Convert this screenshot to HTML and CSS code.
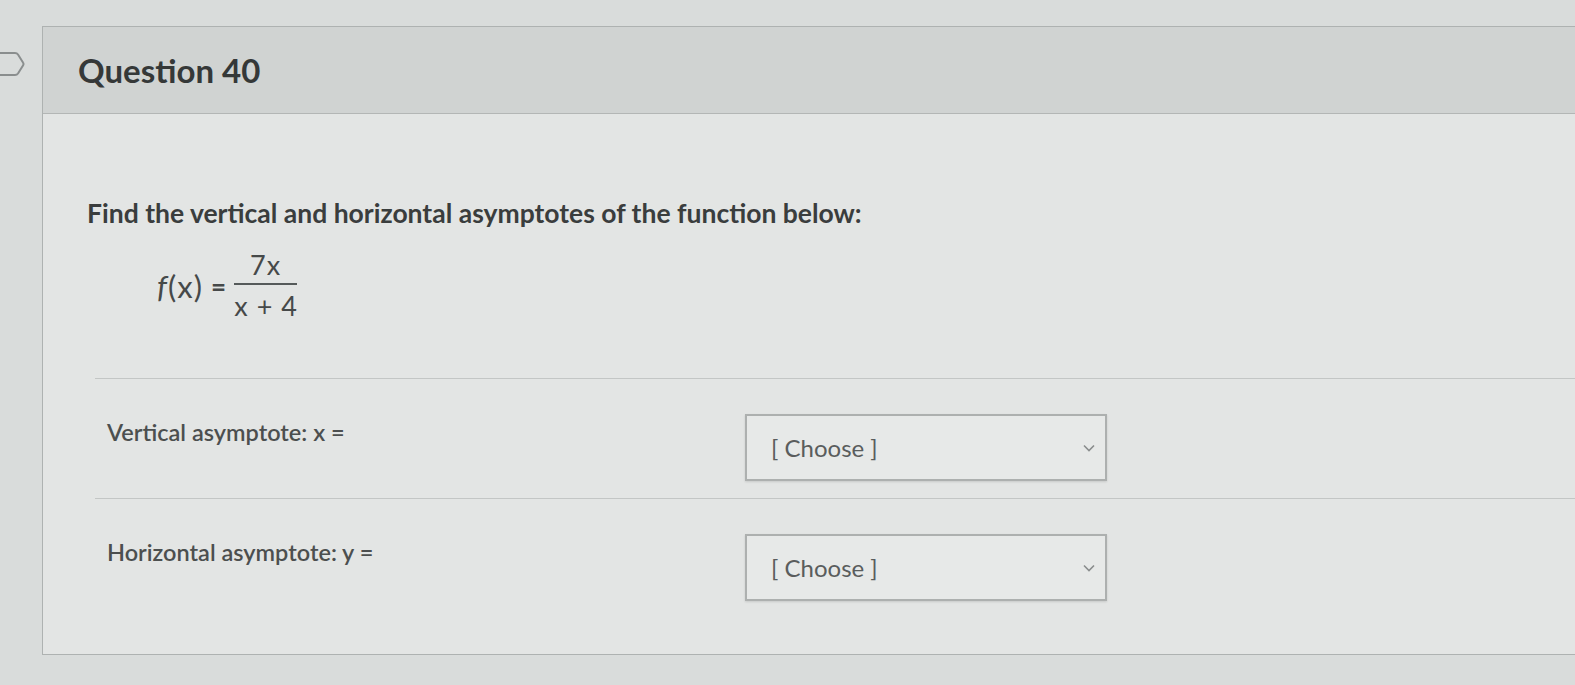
FILE: index.html
```html
<!DOCTYPE html>
<html lang="en">
<head>
    <meta charset="UTF-8">
    <meta name="viewport" content="width=device-width, initial-scale=1.0">
    <title>Question 40</title>
    <link rel="stylesheet" href="styles.css">
</head>
<body>
    <div class="page">
        <div class="gutter">
            <svg class="flag" width="26" height="28" viewBox="0 0 26 28">
                <path d="M-2 3 H15 Q17 3 18 4.5 L23 12.5 Q24 14 23 15.5 L18 23.5 Q17 25 15 25 H-2" fill="none" stroke="#8a8e8e" stroke-width="2"/>
            </svg>
        </div>
        <div class="question">
            <div class="question-header">
                <h2>Question 40</h2>
            </div>
            <div class="question-body">
                <p class="prompt">Find the vertical and horizontal asymptotes of the function below:</p>
                <div class="formula">
                    <span class="fx"><i>f</i>(x)</span>
                    <span class="eq">=</span>
                    <span class="frac">
                        <span class="num">7x</span>
                        <span class="den">x + 4</span>
                    </span>
                </div>
                <div class="answers">
                    <div class="answer-row">
                        <label for="va">Vertical asymptote: x =</label>
                        <div class="select" id="va">
                            <span>[ Choose ]</span>
                            <svg width="12" height="8" viewBox="0 0 12 8"><path d="M1 1.5 L6 6.5 L11 1.5" fill="none" stroke="#8a8d8d" stroke-width="1.6"/></svg>
                        </div>
                    </div>
                    <div class="answer-row">
                        <label for="ha">Horizontal asymptote: y =</label>
                        <div class="select" id="ha">
                            <span>[ Choose ]</span>
                            <svg width="12" height="8" viewBox="0 0 12 8"><path d="M1 1.5 L6 6.5 L11 1.5" fill="none" stroke="#8a8d8d" stroke-width="1.6"/></svg>
                        </div>
                    </div>
                </div>
            </div>
        </div>
    </div>
</body>
</html>
```

FILE: styles.css
```css
body {
    margin: 0;
    padding: 0;
    background-color: #d9dcdb;
    font-family: Lato, "Open Sans", Arial, sans-serif;
    color: #3b3e3e;
    overflow: hidden;
}

.page {
    display: flex;
    height: 685px;
}

.gutter {
    width: 42px;
    flex-shrink: 0;
    padding-top: 50px;
    box-sizing: border-box;
}

.flag {
    display: block;
}

.question {
    flex: 1;
    margin-top: 26px;
    margin-bottom: 30px;
    background-color: #e3e5e4;
    border: 1px solid #aeb2b1;
    border-right: none;
}

.question-header {
    height: 86px;
    background-color: #d0d3d2;
    border-bottom: 1px solid #b3b6b5;
    display: flex;
    align-items: center;
    padding-left: 35px;
}

.question-header h2 {
    margin: 0;
    font-size: 33px;
    font-weight: 700;
    color: #353838;
}

.question-body {
    padding: 0 0 0 44px;
}

.prompt {
    margin: 82px 0 0;
    font-size: 26.5px;
    line-height: 34px;
    font-weight: 700;
    color: #3a3d3d;
}

.formula {
    display: flex;
    align-items: center;
    margin: 21px 0 0 70px;
    font-size: 27px;
    color: #464949;
}

.fx {
    font-size: 31px;
    letter-spacing: 1px;
}

.fx i {
    font-style: italic;
}

.eq {
    margin: 0 8px 0 8px;
    font-weight: 700;
    font-size: 26px;
}

.frac {
    display: inline-flex;
    flex-direction: column;
    align-items: center;
}

.num {
    padding: 0 16px 4px;
    border-bottom: 2px solid #555a5a;
    line-height: 28px;
    letter-spacing: 1px;
}

.den {
    line-height: 30px;
    padding-top: 6px;
    word-spacing: 2px;
}

.answers {
    margin: 57px 0 0 8px;
}

.answer-row {
    display: flex;
    align-items: flex-start;
    border-top: 1px solid #c3c6c5;
    padding: 35px 0 0 12px;
    height: 120px;
    box-sizing: border-box;
}

.answer-row label {
    width: 638px;
    font-size: 23.5px;
    font-weight: 600;
    color: #4c4f4f;
    padding-top: 4px;
}

.select {
    width: 362px;
    height: 67px;
    box-sizing: border-box;
    border: 2px solid #adb0af;
    background-color: #e7e9e8;
    box-shadow: 0 1px 2px rgba(0, 0, 0, 0.12);
    display: flex;
    align-items: center;
    justify-content: space-between;
    padding: 0 10px 0 24px;
    font-size: 24px;
    color: #5a5d5d;
}
```
